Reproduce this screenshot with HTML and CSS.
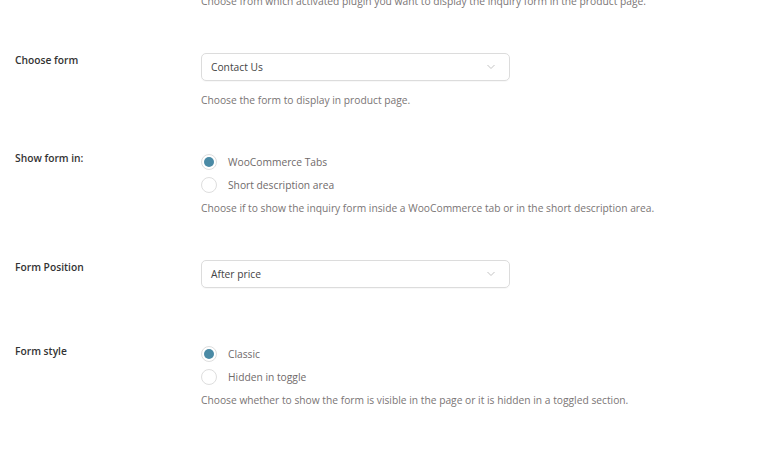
FILE: index.html
```html
<!DOCTYPE html>
<html>
<head>
<meta charset="utf-8">
<link rel="stylesheet" href="styles.css">
</head>
<body>
<div class="settings">
  <div class="row row-top">
    <div class="label"></div>
    <div class="control">
      <p class="desc">Choose from which activated plugin you want to display the inquiry form in the product page.</p>
    </div>
  </div>

  <div class="row row-form">
    <div class="label">Choose form</div>
    <div class="control">
      <div class="select"><span>Contact Us</span><svg class="chev" width="10" height="6" viewBox="0 0 10 6"><path d="M1.5 1l3.5 3.5 3.5-3.5" fill="none" stroke="#c4c4c4" stroke-width="1"/></svg></div>
      <p class="desc desc-after-select">Choose the form to display in product page.</p>
    </div>
  </div>

  <div class="row row-show">
    <div class="label">Show form in:</div>
    <div class="control">
      <div class="radios">
        <label class="radio"><span class="dot checked"></span><span>WooCommerce Tabs</span></label>
        <label class="radio"><span class="dot"></span><span>Short description area</span></label>
      </div>
      <p class="desc desc-after-radio">Choose if to show the inquiry form inside a WooCommerce tab or in the short description area.</p>
    </div>
  </div>

  <div class="row row-pos">
    <div class="label">Form Position</div>
    <div class="control">
      <div class="select"><span>After price</span><svg class="chev" width="10" height="6" viewBox="0 0 10 6"><path d="M1.5 1l3.5 3.5 3.5-3.5" fill="none" stroke="#c4c4c4" stroke-width="1"/></svg></div>
    </div>
  </div>

  <div class="row row-style">
    <div class="label">Form style</div>
    <div class="control">
      <div class="radios">
        <label class="radio"><span class="dot checked"></span><span>Classic</span></label>
        <label class="radio"><span class="dot"></span><span>Hidden in toggle</span></label>
      </div>
      <p class="desc desc-after-radio">Choose whether to show the form is visible in the page or it is hidden in a toggled section.</p>
    </div>
  </div>
</div>
</body>
</html>
```

FILE: styles.css
```css
html, body {
  margin: 0;
  padding: 0;
  background: #ffffff;
  overflow: hidden;
}
body {
  font-family: "Open Sans", "Noto Sans", sans-serif;
  font-size: 10.25px;
  color: #777;
}
.settings {
  padding-left: 15px;
  margin-top: -7px;
}
.row {
  display: grid;
  grid-template-columns: 186px 309px;
}
.label {
  color: #333;
  font-weight: 600;
  line-height: 16px;
}
.desc {
  margin: 0;
  line-height: 16px;
  white-space: nowrap;
  color: #7a7575;
}
.row-form { margin-top: 44px; }
.row-form .label { margin-top: -1px; }
.row-show { margin-top: 42px; }
.row-pos { margin-top: 44px; }
.row-pos .label { margin-top: -1px; }
.row-style { margin-top: 54px; }
.row-style .label { margin-top: 1px; }

.select {
  height: 28px;
  box-sizing: border-box;
  border: 1px solid #dcdcdc;
  border-radius: 5px;
  display: flex;
  align-items: center;
  justify-content: space-between;
  padding: 0 13px 0 9px;
  color: #444;
  box-shadow: 0 1px 1px rgba(0,0,0,0.03);
}
.desc-after-select { margin-top: 11px; }

.radios {
  display: flex;
  flex-direction: column;
}
.radio {
  display: flex;
  align-items: center;
  height: 23px;
  gap: 11px;
  color: #6f6a6a;
}
.dot {
  width: 16px;
  height: 16px;
  box-sizing: border-box;
  border: 1px solid #dedede;
  border-radius: 50%;
  background: #fff;
  position: relative;
}
.dot.checked::after {
  content: "";
  position: absolute;
  left: 2px;
  top: 2px;
  width: 10px;
  height: 10px;
  border-radius: 50%;
  background: #4a8aa5;
}
.desc-after-radio { margin-top: 4px; }
```
